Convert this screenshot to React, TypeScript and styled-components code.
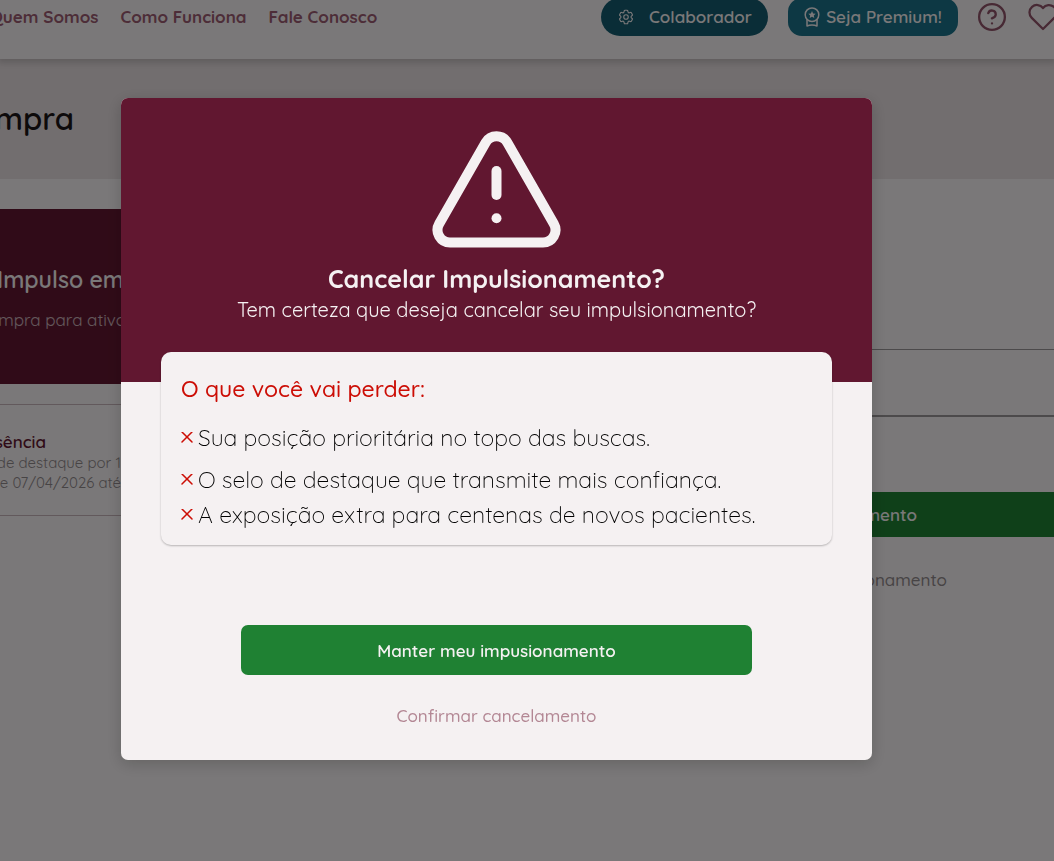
import React from "react";
import styled, { createGlobalStyle } from "styled-components";
import { HiOutlineCog6Tooth } from "react-icons/hi2";

const colors = {
  wine: "#611730",
  surface: "#f5f1f2",
  band: "#e4dcde",
  ink: "#1a1416",
  green: "#1f8133",
  red: "#cc0d05",
  rose: "#b38794",
};

const Global = createGlobalStyle`
  * { box-sizing: border-box; margin: 0; padding: 0; }
  html, body, #root { min-height: 100%; }
  body {
    background: ${colors.surface};
    color: ${colors.ink};
    font-family: Quicksand, "Open Sans", sans-serif;
    overflow: hidden;
  }
  button { font-family: inherit; border: 0; background: none; cursor: pointer; }
`;

const Page = styled.div`
  min-height: 100vh;
  overflow: hidden;
`;

/* ---------- Site header ---------- */
const Header = styled.header`
  position: relative;
  height: 59px;
  box-shadow: 0 2px 6px 2px rgba(0, 0, 0, 0.15);
`;

const HeaderRow = styled.div`
  display: flex;
  align-items: center;
  justify-content: space-between;
  height: 33px;
`;

const Nav = styled.nav`
  display: flex;
  gap: 22px;
  margin-left: -10px;
`;

const NavLink = styled.a`
  color: #9a5a70;
  font-size: 17px;
  line-height: 24px;
  font-weight: 700;
  text-decoration: none;
  white-space: nowrap;
`;

const Actions = styled.div`
  display: flex;
  align-items: center;
  gap: 20px;
  margin-right: -6px;
`;

const Pill = styled.button<{ $tone: string; $round: number; $gap: number; $width: number }>`
  display: flex;
  align-items: center;
  justify-content: center;
  gap: ${(p) => p.$gap}px;
  width: ${(p) => p.$width}px;
  height: 38px;
  border-radius: ${(p) => p.$round}px;
  background: ${(p) => p.$tone};
  color: ${colors.surface};
  font-size: 17px;
  line-height: 24px;
  font-weight: 600;
  white-space: nowrap;
`;

const IconButton = styled.button`
  display: flex;
  color: #8f5268;
  margin: 0 -1px 0 -4px;
`;

/* ---------- Page behind the dialog ---------- */
const TitleBand = styled.section`
  height: 120px;
  padding-top: 40px;
  background: ${colors.band};
`;

const Clip = styled.div<{ $width: number }>`
  display: flex;
  justify-content: flex-end;
  width: ${(p) => p.$width}px;
  overflow: hidden;
  white-space: nowrap;
`;

const PageTitle = styled.h1`
  font-size: 31px;
  line-height: 40px;
  font-weight: 600;
`;

const Columns = styled.main`
  display: grid;
  grid-template-columns: 1fr 1fr;
  padding-top: 30px;
`;

const BoostPanel = styled.section`
  height: 175px;
  padding-top: 55px;
  background: ${colors.wine};
  color: ${colors.surface};
`;

const BoostTitle = styled.h2`
  margin-bottom: 12px;
  font-size: 23px;
  line-height: 32px;
  font-weight: 600;
`;

const BoostText = styled.p`
  font-size: 17px;
  line-height: 24px;
  opacity: 0.7;
`;

const Plan = styled.section`
  margin-top: 20px;
  padding: 25px 0 22px;
  border: solid #c4b2b8;
  border-width: 1px 0;
`;

const PlanName = styled.h3`
  color: ${colors.wine};
  font-size: 17px;
  line-height: 23px;
  font-weight: 600;
`;

const PlanText = styled.p`
  color: #8f888b;
  font-size: 15px;
  line-height: 20px;
`;

const Summary = styled.section`
  padding-top: 140px;
`;

const Rule = styled.hr<{ $size: number; $after: number }>`
  border: 0;
  height: ${(p) => p.$size}px;
  margin-bottom: ${(p) => p.$after}px;
  background: #989496;
`;

const SummaryButton = styled.button`
  display: block;
  width: 100%;
  height: 45px;
  padding-right: 137px;
  background: ${colors.green};
  color: ${colors.surface};
  font-size: 17px;
  font-weight: 600;
  text-align: right;
`;

const SummaryLink = styled.button`
  display: block;
  width: 100%;
  margin-top: 31px;
  padding-right: 107px;
  color: #8f888b;
  font-size: 17px;
  line-height: 24px;
  font-weight: 500;
  text-align: right;
`;

/* ---------- Dialog ---------- */
const Overlay = styled.div`
  position: fixed;
  inset: 0;
  padding: 98px 182px 0 121px;
  background: rgba(0, 0, 0, 0.5);
`;

const Dialog = styled.div`
  overflow: hidden;
  padding-bottom: 32px;
  border-radius: 7px;
  background: ${colors.surface};
  box-shadow: 0 4px 16px rgba(0, 0, 0, 0.18);
`;

const DialogHead = styled.header`
  display: flex;
  flex-direction: column;
  align-items: center;
  height: 284px;
  padding-top: 33px;
  background: ${colors.wine};
  color: ${colors.surface};
  text-align: center;
`;

const DialogTitle = styled.h2`
  margin-top: 15px;
  font-size: 25px;
  line-height: 32px;
  font-weight: 700;
`;

const DialogText = styled.p`
  font-size: 20px;
  line-height: 30px;
`;

const LossCard = styled.section`
  position: relative;
  margin: -30px 40px 0;
  height: 193px;
  padding: 21px 20px 0;
  border-radius: 10px;
  background: ${colors.surface};
  box-shadow: 0 1px 2px rgba(0, 0, 0, 0.25);
`;

const LossTitle = styled.h3`
  margin-bottom: 15px;
  color: ${colors.red};
  font-size: 23px;
  line-height: 32px;
  font-weight: 500;
`;

const LossList = styled.ul`
  list-style: none;
`;

const LossItem = styled.li`
  display: flex;
  align-items: center;
  gap: 5px;
  color: #000;
  font-size: 23px;
  line-height: 35px;
  font-weight: 300;
  &:first-child { margin-bottom: 7px; }
`;

const DialogActions = styled.footer`
  display: flex;
  flex-direction: column;
  gap: 29px;
  margin: 80px 120px 0;
`;

const KeepButton = styled.button`
  height: 50px;
  border-radius: 7px;
  background: ${colors.green};
  color: ${colors.surface};
  font-size: 17px;
  font-weight: 600;
`;

const ConfirmButton = styled.button`
  color: ${colors.rose};
  font-size: 17px;
  line-height: 24px;
  font-weight: 500;
`;

const stroke = {
  fill: "none",
  stroke: "currentColor",
  strokeLinecap: "round" as const,
  strokeLinejoin: "round" as const,
};

const AwardIcon = () => (
  <svg width="16" height="20" viewBox="0 0 16 20" {...stroke} strokeWidth="1.5" aria-hidden="true">
    <circle cx="8" cy="7.7" r="6.8" />
    <path d="M3 12.800v6.200c1.500-.7 3.200-1 5-1s3.500.3 5 1v-6.200" />
    <path
      d="M8 4l1.100 2.400 2.600.3-1.900 1.800.5 2.600L8 9.800l-2.300 1.300.5-2.600-1.900-1.800 2.600-.3z"
      fill="currentColor"
      stroke="none"
    />
  </svg>
);

const HelpIcon = () => (
  <svg width="36" height="36" viewBox="-2 -2 28 28" {...stroke} strokeWidth="1.8" aria-hidden="true">
    <circle cx="12" cy="12" r="10" />
    <path d="M9.090 9a3 3 0 0 1 5.830 1c0 2-3 3-3 3" />
    <path d="M12 17h.01" />
  </svg>
);

const HeartIcon = () => (
  <svg width="36" height="36" viewBox="0 0 24 24" {...stroke} strokeWidth="1.5" aria-hidden="true">
    <path d="M19.500 12.572L12 20l-7.500-7.428A5 5 0 1 1 12 6.006a5 5 0 1 1 7.500 6.572" />
  </svg>
);

const WarningIcon = () => (
  <svg width="127" height="117" viewBox="0 0 127 117" {...stroke} strokeWidth="10" overflow="visible" aria-hidden="true">
    <path d="M52.700 11.500A12.500 12.500 0 0 1 74.300 11.500L120.800 92.800A12.500 12.500 0 0 1 110 111.500H17A12.500 12.500 0 0 1 6.200 92.800Z" />
    <path d="M63.500 40V64" />
    <circle cx="63.500" cy="87.300" r="5" fill="currentColor" stroke="none" />
  </svg>
);

const CrossIcon = () => (
  <svg width="12" height="12" viewBox="0 0 12 12" {...stroke} stroke={colors.red} strokeWidth="1.5" aria-hidden="true">
    <path d="M1 0l10 10M11 0L1 10" />
  </svg>
);

const losses = [
  "Sua posição prioritária no topo das buscas.",
  "O selo de destaque que transmite mais confiança.",
  "A exposição extra para centenas de novos pacientes.",
];

export default function App() {
  return (
    <Page>
      <Global />
      <Header>
        <HeaderRow>
          <Nav>
            <NavLink href="#quem-somos">Quem Somos</NavLink>
            <NavLink href="#como-funciona">Como Funciona</NavLink>
            <NavLink href="#fale-conosco">Fale Conosco</NavLink>
          </Nav>
          <Actions>
            <Pill $tone="#145a6e" $round={19} $gap={14} $width={167}>
              <HiOutlineCog6Tooth size={18} />
              Colaborador
            </Pill>
            <Pill $tone="#1a7088" $round={14} $gap={6} $width={170}>
              <AwardIcon />
              Seja Premium!
            </Pill>
            <IconButton aria-label="Ajuda">
              <HelpIcon />
            </IconButton>
            <IconButton aria-label="Favoritos">
              <HeartIcon />
            </IconButton>
          </Actions>
        </HeaderRow>
      </Header>

      <TitleBand>
        <Clip $width={74}>
          <PageTitle>Compra</PageTitle>
        </Clip>
      </TitleBand>

      <Columns>
        <div>
          <BoostPanel>
            <Clip $width={124}>
              <BoostTitle>Impulso em</BoostTitle>
            </Clip>
            <Clip $width={126}>
              <BoostText>compra para ativo</BoostText>
            </Clip>
          </BoostPanel>
          <Plan>
            <Clip $width={46}>
              <PlanName>Essência</PlanName>
            </Clip>
            <Clip $width={121}>
              <PlanText>de destaque por 1</PlanText>
            </Clip>
            <Clip $width={121}>
              <PlanText>de 07/04/2026 até</PlanText>
            </Clip>
          </Plan>
        </div>
        <Summary>
          <Rule $size={1} $after={65} />
          <Rule $size={2} $after={75} />
          <SummaryButton>Finalizar pagamento</SummaryButton>
          <SummaryLink>Cancelar impulsionamento</SummaryLink>
        </Summary>
      </Columns>

      <Overlay>
        <Dialog role="dialog" aria-modal="true" aria-labelledby="dialog-title">
          <DialogHead>
            <WarningIcon />
            <DialogTitle id="dialog-title">Cancelar Impulsionamento?</DialogTitle>
            <DialogText>Tem certeza que deseja cancelar seu impulsionamento?</DialogText>
          </DialogHead>
          <LossCard>
            <LossTitle>O que você vai perder:</LossTitle>
            <LossList>
              {losses.map((text) => (
                <LossItem key={text}>
                  <CrossIcon />
                  {text}
                </LossItem>
              ))}
            </LossList>
          </LossCard>
          <DialogActions>
            <KeepButton>Manter meu impusionamento</KeepButton>
            <ConfirmButton>Confirmar cancelamento</ConfirmButton>
          </DialogActions>
        </Dialog>
      </Overlay>
    </Page>
  );
}
